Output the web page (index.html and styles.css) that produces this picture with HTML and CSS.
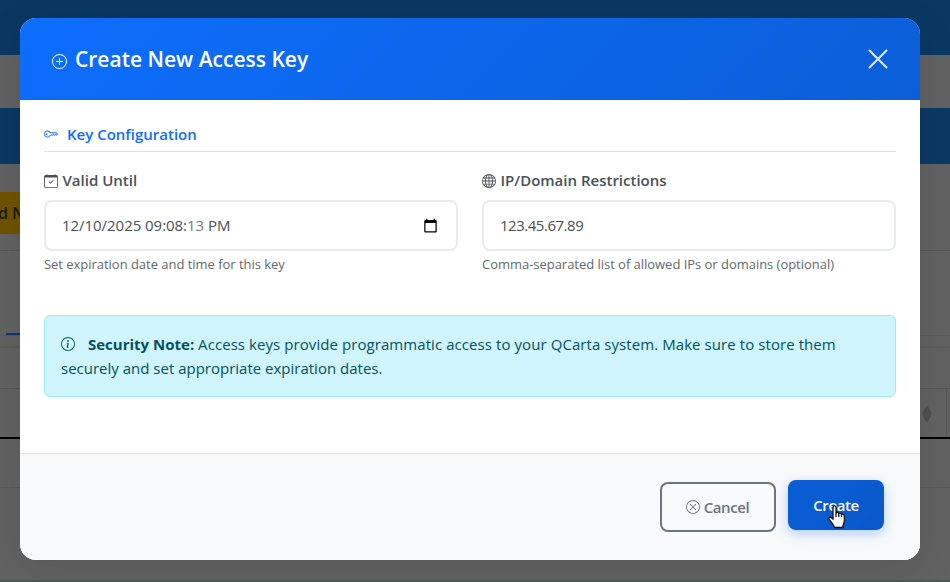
FILE: index.html
```html
<!DOCTYPE html>
<html lang="en">
<head>
<meta charset="utf-8">
<title>Create New Access Key</title>
<link rel="stylesheet" href="styles.css">
</head>
<body>
<div class="page">
  <div class="navbar"></div>
  <div class="crumbs"></div>
  <div class="card-head"></div>
  <div class="toolbar"><div class="add-btn">d N</div></div>
  <div class="tabs"><div class="tab-active"></div></div>
  <div class="tab-gap"></div>
  <div class="table-tools"></div>
  <div class="table-head"><div class="head-cell"><svg class="sort" viewBox="0 0 10 18"><path d="M5 0 10 9 5 18 0 9z"/></svg></div></div>
  <div class="table-row"></div>
</div>
<div class="modal">
  <header class="modal-header">
    <svg class="icon i-plus" viewBox="0 0 16 16"><path d="M8 15A7 7 0 1 1 8 1a7 7 0 0 1 0 14m0 1A8 8 0 1 0 8 0a8 8 0 0 0 0 16"/><path d="M8 4a.5.5 0 0 1 .5.5v3h3a.5.5 0 0 1 0 1h-3v3a.5.5 0 0 1-1 0v-3h-3a.5.5 0 0 1 0-1h3v-3A.5.5 0 0 1 8 4"/></svg>
    <h5 class="title">Create New Access Key</h5>
    <svg class="close" viewBox="0 0 20 20"><path d="M1.500 1.500 18.500 18.500M18.500 1.500 1.500 18.500"/></svg>
  </header>
  <main class="modal-body">
    <h6 class="section"><svg class="icon" viewBox="0 0 16 16"><path d="M0 8a4 4 0 0 1 7.465-2H14a.5.5 0 0 1 .354.146l1.500 1.500a.5.5 0 0 1 0 .708l-1.500 1.500a.5.5 0 0 1-.708 0L13 9.207l-.646.647a.5.5 0 0 1-.708 0L11 9.207l-.646.647a.5.5 0 0 1-.708 0L9 9.207l-.646.647A.5.5 0 0 1 8 10h-.535A4 4 0 0 1 0 8m4-3a3 3 0 1 0 2.712 4.285A.5.5 0 0 1 7.163 9h.63l.853-.854a.5.5 0 0 1 .708 0l.646.647.646-.647a.5.5 0 0 1 .708 0l.646.647.646-.647a.5.5 0 0 1 .708 0l.646.647.793-.793-1-1h-6.630a.5.5 0 0 1-.451-.285A3 3 0 0 0 4 5"/><path d="M4 8a1 1 0 1 1-2 0 1 1 0 0 1 2 0"/></svg><span>Key Configuration</span></h6>
    <div class="fields">
      <div class="field">
        <div class="label"><svg class="icon" viewBox="0 0 16 16"><path d="M10.854 7.146a.5.5 0 0 1 0 .708l-3 3a.5.5 0 0 1-.708 0l-1.500-1.500a.5.5 0 1 1 .708-.708L7.500 9.793l2.646-2.647a.5.5 0 0 1 .708 0"/><path d="M3.500 0a.5.5 0 0 1 .5.5V1h8V.5a.5.5 0 0 1 1 0V1h1a2 2 0 0 1 2 2v11a2 2 0 0 1-2 2H2a2 2 0 0 1-2-2V3a2 2 0 0 1 2-2h1V.5a.5.5 0 0 1 .5-.5M1 4v10a1 1 0 0 0 1 1h12a1 1 0 0 0 1-1V4z"/></svg><span>Valid Until</span></div>
        <div class="control"><span class="date">12/10/2025 09:08:<span class="sec">13</span> PM</span>
          <svg class="picker" viewBox="0 0 24 24"><path d="M20 3h-1V1h-2v2H7V1H5v2H4c-1.100 0-2 .9-2 2v16c0 1.100.9 2 2 2h16c1.100 0 2-.9 2-2V5c0-1.100-.9-2-2-2zm0 18H4V8h16v13z"/></svg></div>
        <div class="help">Set expiration date and time for this key</div>
      </div>
      <div class="field">
        <div class="label"><svg class="icon" viewBox="0 0 16 16"><path d="M0 8a8 8 0 1 1 16 0A8 8 0 0 1 0 8m7.500-6.923c-.67.204-1.335.82-1.887 1.855A8 8 0 0 0 5.145 4H7.500zM4.090 4a9.300 9.300 0 0 1 .64-1.539 7 7 0 0 1 .597-.933A7.030 7.030 0 0 0 2.255 4zm-.582 3.500c.03-.877.138-1.718.312-2.500H1.674a7 7 0 0 0-.656 2.500zM4.847 5a12.500 12.500 0 0 0-.338 2.500H7.500V5zM8.500 5v2.500h2.990a12.500 12.500 0 0 0-.337-2.500zM4.510 8.500a12.500 12.500 0 0 0 .337 2.500H7.500V8.500zm3.990 0V11h2.653c.187-.765.306-1.608.338-2.500zM5.145 12q.208.58.468 1.068c.552 1.035 1.218 1.650 1.887 1.855V12zm.182 2.472a7 7 0 0 1-.597-.933A9.300 9.300 0 0 1 4.090 12H2.255a7 7 0 0 0 3.072 2.472M3.820 11a13.700 13.700 0 0 1-.312-2.500h-2.490c.062.890.291 1.733.656 2.500zm6.853 3.472A7 7 0 0 0 13.745 12H11.910a9.300 9.300 0 0 1-.64 1.539 7 7 0 0 1-.597.933M8.500 12v2.923c.67-.204 1.335-.82 1.887-1.855q.26-.487.468-1.068zm3.680-1h2.146c.365-.767.594-1.610.656-2.500h-2.490a13.700 13.700 0 0 1-.312 2.500m2.802-3.500a7 7 0 0 0-.656-2.500H12.180c.174.782.282 1.623.312 2.500zM11.270 2.461c.247.464.462.980.640 1.539h1.835a7 7 0 0 0-3.072-2.472c.218.284.418.598.597.933M10.855 4a8 8 0 0 0-.468-1.068C9.835 1.897 9.170 1.282 8.500 1.077V4z"/></svg><span>IP/Domain Restrictions</span></div>
        <div class="control"><span class="ip">123.45.67.89</span></div>
        <div class="help">Comma-separated list of allowed IPs or domains (optional)</div>
      </div>
    </div>
    <div class="alert"><svg class="icon" viewBox="0 0 16 16"><path d="M8 15A7 7 0 1 1 8 1a7 7 0 0 1 0 14m0 1A8 8 0 1 0 8 0a8 8 0 0 0 0 16"/><path d="m8.930 6.588-2.290.287-.082.380.450.083c.294.070.352.176.288.469l-.738 3.468c-.194.897.105 1.319.808 1.319.545 0 1.178-.252 1.465-.598l.088-.416c-.2.176-.492.246-.686.246-.275 0-.375-.193-.304-.533zM9 4.500a1 1 0 1 1-2 0 1 1 0 0 1 2 0"/></svg><strong>Security Note:</strong> <span class="lead">Access keys provide programmatic access to your QCarta system. Make sure to store them</span><br>securely and set appropriate expiration dates.</div>
  </main>
  <footer class="modal-footer">
    <button class="btn cancel"><svg class="icon" viewBox="0 0 16 16"><path d="M8 15A7 7 0 1 1 8 1a7 7 0 0 1 0 14m0 1A8 8 0 1 0 8 0a8 8 0 0 0 0 16"/><path d="M4.646 4.646a.5.5 0 0 1 .708 0L8 7.293l2.646-2.647a.5.5 0 0 1 .708.708L8.707 8l2.647 2.646a.5.5 0 0 1-.708.708L8 8.707l-2.646 2.647a.5.5 0 0 1-.708-.708L7.293 8 4.646 5.354a.5.5 0 0 1 0-.708"/></svg><span>Cancel</span></button>
    <button class="btn create"><span>Create</span>
    <svg class="cursor" viewBox="0 0 18 24"><path d="M5 2.500C5 .4 8 .4 8 2.500V8c.4-1 2.500-.8 2.800.5.500-.8 2.400-.5 2.700.8.600-.6 2.800-.3 2.800 1.700v5c0 2.500-1.500 3-1.500 6.500H6.500C6 19.500 3 17.500 1.300 14.500c-1-2 .8-3 2.200-1.800L5 14z"/><path d="M8 8v4M10.800 8.500V12M13.500 9.500V12"/></svg></button>
  </footer>
</div>
</body>
</html>
```
FILE: styles.css
```css
* { box-sizing: border-box; }
body { margin: 0; width: 950px; height: 582px; overflow: hidden; background: #626262; font-family: "Open Sans", "Noto Sans", sans-serif; font-size: 15px; color: #495057; }
h5, h6 { margin: 0; }
.page { height: 582px; border-bottom: 2px solid #4c5b56; }
.navbar { height: 55px; background: #0b3861; }
.crumbs { height: 53px; }
.card-head { height: 56px; background: #0c3864; }
.toolbar { height: 87px; padding-top: 28px; border-bottom: 1px solid #585858; }
.add-btn { width: 60px; height: 42px; margin-left: -2px; background: #6f5300; color: #191919; font-size: 16px; line-height: 42px; font-weight: 600; }
.tabs { height: 85px; padding: 82px 0 0 6px; border-bottom: 1px solid #5a5a5a; }
.tab-active { height: 2px; width: 100px; background: #08377f; }
.tab-gap { height: 12px; border-bottom: 2px solid #5a5a5a; }
.table-tools { height: 41px; border-bottom: 1px solid #565656; }
.table-head { height: 50px; border-bottom: 2px solid #000; }
.head-cell { display: flex; justify-content: flex-end; width: 947px; height: 48px; padding: 16px 14px 0 0; border-right: 1px solid #565656; }
.sort { width: 10px; height: 18px; fill: #4f4f4f; }
.table-row { height: 49px; border-bottom: 1px solid #565656; }
.modal { position: absolute; left: 20px; top: 18px; width: 900px; height: 542px; border-radius: 16px; overflow: hidden; background: #fff; display: flex; flex-direction: column; box-shadow: 0 10px 40px rgba(0,0,0,.1); }
.icon { width: 14px; height: 14px; fill: currentColor; flex: none; }
.modal-header { display: flex; align-items: center; height: 82px; padding: 0 32px 1px; background: linear-gradient(135deg, #0d6efd, #0b5ed7); color: #fff; }
.i-plus { width: 15px; height: 15px; margin: 6px 8px 0 0; }
.title { font-size: 21px; font-weight: 600; line-height: 30px; flex: 1; margin-top: 1px; }
.close { width: 20px; height: 20px; stroke: #dfeafd; stroke-width: 2; stroke-linecap: round; }
.modal-body { flex: 1; padding: 24px; }
.section { display: flex; align-items: center; gap: 9px; height: 28px; padding-bottom: 7px; border-bottom: 1px solid #dee2e6; color: #0d6efd; font-size: 15px; line-height: 20px; font-weight: 600; }
.fields { display: grid; grid-template-columns: 414px 414px; gap: 24px; margin-top: 18px; }
.label { display: flex; align-items: center; gap: 5px; height: 22px; font-weight: 600; }
.label span { margin: -2px 0 0 -.5px; }
.control { display: flex; align-items: center; justify-content: space-between; height: 51px; margin-top: 8px; padding: 0 18px 0 16px; border: 2px solid #e9ecef; border-radius: 8px; font-size: 15px; }
.control span { margin-top: -1px; }
.date { letter-spacing: -.04px; }
.ip { letter-spacing: -.48px; }
.sec { color: #777; }
.picker { width: 15px; height: 15px; fill: #000; }
.help { height: 20px; margin-top: 3px; font-size: 13px; line-height: 20px; letter-spacing: -.03px; color: #62686d; }
.alert { height: 82px; margin-top: 41px; padding: 16px; border: 1px solid #9eeaf9; border-radius: 6px; background: #cff4fc; color: #055160; line-height: 24px; white-space: nowrap; }
.alert .icon { margin-right: 13px; vertical-align: -1px; }
.alert strong { font-weight: 700; }
.lead { letter-spacing: .073px; }
.modal-footer { display: flex; justify-content: flex-end; gap: 12px; height: 107px; padding: 28px 36px 0; border-top: 1px solid #dee2e6; background: #f8f9fa; }
.btn { display: flex; align-items: center; justify-content: center; height: 50px; border-radius: 8px; font: 600 15px "Open Sans", sans-serif; letter-spacing: -.4px; padding: 0; }
.cancel { gap: 4px; padding-right: 1px; width: 116px; border: 2px solid #6c757d; background: transparent; color: #6c757d; }
.create { position: relative; top: -2px; width: 96px; border: 0; color: #fff; background: linear-gradient(135deg, #0b5ed7, #0a58ca); box-shadow: 0 4px 12px rgba(13,110,253,.3); }
.cursor { position: absolute; left: 40px; top: 25px; width: 18px; height: 24px; fill: #fff; stroke: #111; stroke-width: 1.3; }
```
